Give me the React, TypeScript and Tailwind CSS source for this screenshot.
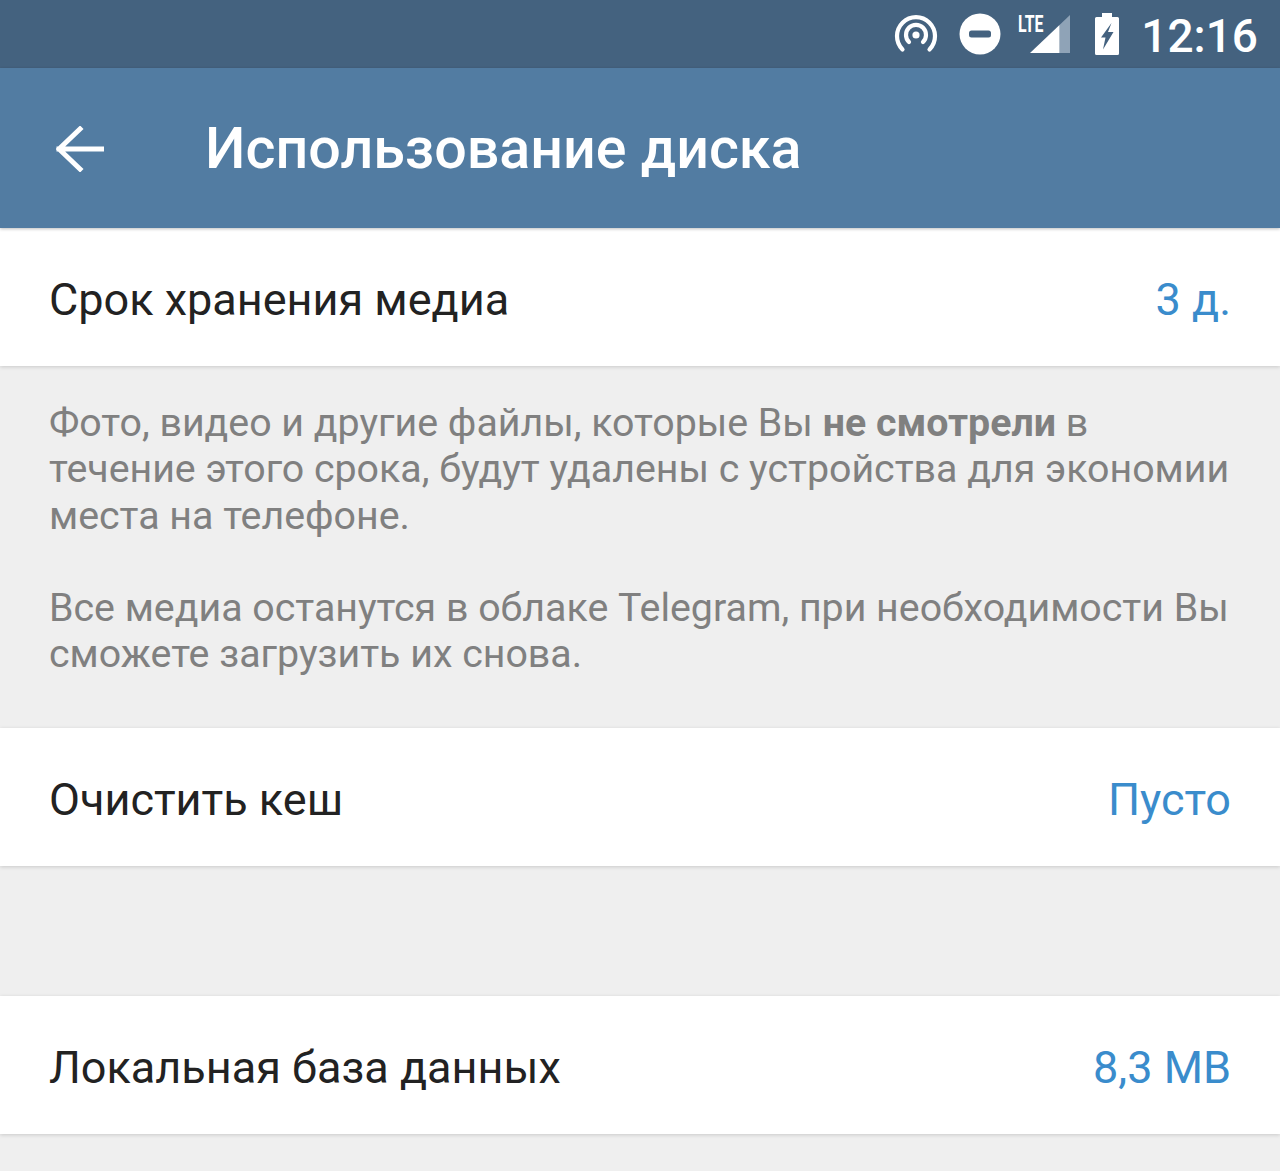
const ROBOTO = "font-['Roboto',sans-serif]";

function Row({ label, value }: { label: string; value: string }) {
  return (
    <div className="relative flex h-[138px] items-center justify-between bg-white px-[49px] pt-[5px] shadow-[0_1px_4px_rgba(0,0,0,0.16)]">
      <span className="text-[45px] leading-none text-[#222222]">{label}</span>
      <span className="text-[45px] leading-none text-[#3a8ccc]">{value}</span>
    </div>
  );
}

function StatusIcons() {
  return (
    <div className="flex items-center">
      {/* hotspot */}
      <svg width="44" height="40" viewBox="0 0 44 40" className="mr-[21px]">
        <g fill="none" stroke="#fff" strokeWidth="4.2" strokeLinecap="round">
          <path d="M8.5 35.5A19 19 0 1 1 35.5 35.5" />
          <path d="M15 28a10 10 0 1 1 14 0" />
        </g>
        <circle cx="22" cy="21" r="3.6" fill="#fff" />
      </svg>
      {/* do not disturb */}
      <svg width="42" height="42" viewBox="0 0 42 42" className="mr-[29px]">
        <circle cx="21" cy="21" r="20.5" fill="#fff" />
        <rect x="10" y="17.5" width="22" height="7" rx="2.5" fill="#44627f" />
      </svg>
      {/* signal */}
      <div className="relative mr-[25px] h-[38px] w-[40px]">
        <svg width="40" height="38" viewBox="0 0 40 38" className="absolute left-0 top-0">
          <path d="M29.5 10L40 0V38H29.5Z" fill="#8fa3b7" />
          <path d="M0 38L29.5 10V38Z" fill="#fff" />
        </svg>
        <span className="absolute left-[-12px] top-[-3px] origin-left scale-x-[0.66] text-[24px] font-bold leading-none text-white">LTE</span>
      </div>
      {/* battery */}
      <svg width="24" height="42" viewBox="0 0 24 42" className="mr-[22px]">
        <path d="M7 0H17V4H22.5A1.5 1.5 0 0 1 24 5.5V40.5A1.5 1.5 0 0 1 22.5 42H1.5A1.5 1.5 0 0 1 0 40.5V5.5A1.5 1.5 0 0 1 1.5 4H7Z" fill="#fff" />
        <path d="M16.5 10L6 24.5H10.5L8 36.5L18.5 19H13Z" fill="#44627f" />
      </svg>
      <span className="pt-[3px] text-[46px] font-medium leading-none text-white">12:16</span>
    </div>
  );
}

export default function App() {
  return (
    <div className={`${ROBOTO} min-h-[1171px] w-full overflow-hidden bg-[#efefef]`}>
      <div className="flex h-[68px] items-center justify-end bg-[#44627f] pr-[22px]">
        <StatusIcons />
      </div>

      <header className="relative z-10 flex h-[160px] items-center bg-[#527ca2] pl-[56px] shadow-[0_1px_3px_rgba(0,0,0,0.25)]">
        <svg width="48" height="46" viewBox="0 0 48 46" className="mr-[101px] mt-[2px]">
          <path d="M46 23H3M24 3L3 23L24 43" fill="none" stroke="#fff" strokeWidth="5" strokeLinecap="square" />
        </svg>
        <h1 className="pt-[1px] text-[57.4px] font-medium leading-none text-white">Использование диска</h1>
      </header>

      <Row label="Срок хранения медиа" value="3 д." />

      <div className="h-[362px] whitespace-nowrap px-[49px] pt-[34px] text-[39.35px] leading-[46.3px] text-[#808080]">
        <p>
          Фото, видео и другие файлы, которые Вы <b className="font-bold">не смотрели</b> в
          <br />
          течение этого срока, будут удалены с устройства для экономии
          <br />
          места на телефоне.
        </p>
        <p className="mt-[46px]">
          Все медиа останутся в облаке Telegram, при необходимости Вы
          <br />
          сможете загрузить их снова.
        </p>
      </div>

      <Row label="Очистить кеш" value="Пусто" />
      <div className="h-[130px]" />
      <Row label="Локальная база данных" value="8,3 MB" />
    </div>
  );
}
